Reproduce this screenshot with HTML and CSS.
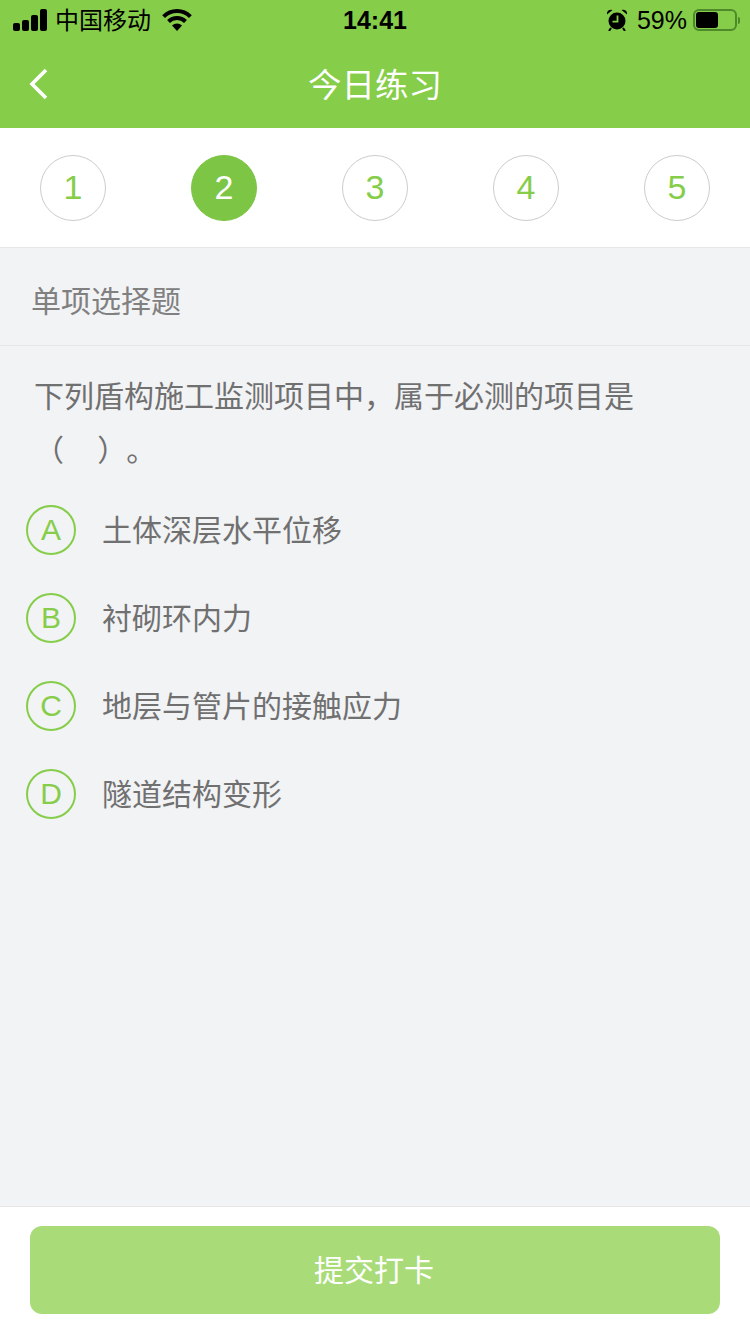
FILE: index.html
```html
<!DOCTYPE html>
<html lang="zh">
<head>
    <meta charset="UTF-8">
    <meta name="viewport" content="width=device-width, initial-scale=1.0">
    <title>今日练习</title>
    <link rel="stylesheet" href="styles.css">
</head>
<body>
    <div class="page">
        <div class="header">
            <div class="status-bar">
                <div class="status-left">
                    <svg class="signal" width="34" height="22" viewBox="0 0 34 22">
                        <rect x="0" y="14" width="7" height="8" rx="2"/>
                        <rect x="9" y="11" width="7" height="11" rx="2"/>
                        <rect x="18" y="6" width="7" height="16" rx="2"/>
                        <rect x="27" y="0" width="7" height="22" rx="2"/>
                    </svg>
                    <span class="carrier">中国移动</span>
                    <svg class="wifi" width="30" height="22" viewBox="0 0 30 22">
                        <path d="M15 22l-5-5.5a7.5 7.5 0 0 1 10 0z"/>
                        <path d="M6.5 12.5a12 12 0 0 1 17 0M1.6 7.6a19 19 0 0 1 26.8 0" fill="none" stroke="#000" stroke-width="4"/>
                    </svg>
                </div>
                <div class="status-time">14:41</div>
                <div class="status-right">
                    <svg class="alarm" width="20" height="22" viewBox="0 0 20 22">
                        <circle cx="10" cy="12" r="8.5"/>
                        <path d="M0 5.5a4 4 0 0 1 5.5-4.5zM20 5.5a4 4 0 0 0-5.5-4.5z"/>
                        <path d="M4 19l-2 3M16 19l2 3" stroke="#000" stroke-width="2" fill="none"/>
                        <path d="M10.5 6.5v6.2h-5" stroke="#86cd4a" stroke-width="1.8" fill="none"/>
                    </svg>
                    <span class="percent">59%</span>
                    <div class="battery"><div class="battery-level"></div></div>
                    <div class="battery-tip"></div>
                </div>
            </div>
            <div class="nav-bar">
                <svg class="back" width="20" height="32" viewBox="0 0 20 32">
                    <path d="M17 2L3 16l14 14" fill="none" stroke="#fff" stroke-width="3.6"/>
                </svg>
                <div class="nav-title">今日练习</div>
            </div>
        </div>

        <div class="steps">
            <div class="step">1</div>
            <div class="step active">2</div>
            <div class="step">3</div>
            <div class="step">4</div>
            <div class="step">5</div>
        </div>

        <div class="content">
            <div class="type-title">单项选择题</div>
            <p class="question">下列盾构施工监测项目中，属于必测的项目是<span class="blank">（&nbsp;&nbsp;&nbsp;&nbsp;）</span>。</p>
            <div class="options">
                <div class="option"><span class="letter">A</span><span class="option-text">土体深层水平位移</span></div>
                <div class="option"><span class="letter">B</span><span class="option-text">衬砌环内力</span></div>
                <div class="option"><span class="letter">C</span><span class="option-text">地层与管片的接触应力</span></div>
                <div class="option"><span class="letter">D</span><span class="option-text">隧道结构变形</span></div>
            </div>
        </div>

        <div class="footer">
            <button class="submit">提交打卡</button>
        </div>
    </div>
</body>
</html>
```

FILE: styles.css
```css
body {
    margin: 0;
    font-family: "Liberation Sans", "Noto Sans CJK SC", sans-serif;
    background: #f2f3f5;
    color: #666;
}

.page {
    width: 750px;
    height: 1334px;
    display: flex;
    flex-direction: column;
    overflow: hidden;
}

.header {
    height: 128px;
    background: #86cd4a;
}

.status-bar {
    height: 40px;
    display: flex;
    align-items: center;
    justify-content: space-between;
    color: #000;
}

.status-left, .status-right {
    width: 300px;
    display: flex;
    align-items: center;
}

.status-left {
    padding-left: 13px;
}

.signal {
    margin-right: 8px;
}

.carrier {
    font-size: 24px;
    padding-bottom: 4px;
}

.wifi {
    margin-left: 11px;
}

.status-time {
    font-size: 25px;
    font-weight: bold;
    padding-right: 3px;
}

.status-right {
    justify-content: flex-end;
    padding-right: 10px;
}

.alarm {
    margin-bottom: 1px;
}

.percent {
    font-size: 25px;
    margin-left: 10px;
}

.battery {
    width: 44px;
    height: 22px;
    margin-left: 6px;
    padding: 1px;
    border: 2px solid #4f8a2a;
    border-radius: 6px;
    box-sizing: border-box;
    display: flex;
}

.battery-level {
    width: 22px;
    background: #000;
    border-radius: 3px;
}

.battery-tip {
    width: 2px;
    height: 7px;
    margin-left: 1px;
    background: #4f8a2a;
    border-radius: 0 2px 2px 0;
}

.nav-bar {
    height: 88px;
    position: relative;
    display: flex;
    align-items: center;
    justify-content: center;
}

.back {
    position: absolute;
    left: 29px;
    top: 28px;
}

.nav-title {
    font-size: 33.5px;
    color: #fff;
    padding-bottom: 4px;
}

.steps {
    height: 119px;
    padding: 0 40px;
    background: #fff;
    border-bottom: 1px solid #e6e6e6;
    display: flex;
    align-items: center;
    justify-content: space-between;
}

.step {
    width: 66px;
    height: 66px;
    box-sizing: border-box;
    border: 1px solid #ccc;
    border-radius: 50%;
    display: flex;
    align-items: center;
    justify-content: center;
    font-size: 34px;
    color: #86cd4a;
}

.step.active {
    background: #7dc544;
    border-color: #7dc544;
    color: #fff;
}

.content {
    flex: 1;
}

.type-title {
    height: 98px;
    padding-left: 31px;
    border-bottom: 1px solid #e6e6e6;
    font-size: 30px;
    line-height: 107px;
    box-sizing: border-box;
    color: #808080;
}

.question {
    margin: 0;
    padding: 24px 100px 0 34px;
    font-size: 30px;
    line-height: 54px;
    color: #707070;
}

.blank {
    margin-right: 14px;
}

.options {
    margin-top: 8px;
    padding-left: 26px;
}

.option {
    height: 88px;
    display: flex;
    align-items: center;
}

.letter {
    width: 50px;
    height: 50px;
    box-sizing: border-box;
    border: 2px solid #86cd4a;
    border-radius: 50%;
    display: flex;
    align-items: center;
    justify-content: center;
    font-size: 30px;
    color: #86cd4a;
}

.option-text {
    margin-left: 26px;
    padding-bottom: 4px;
    font-size: 30px;
    color: #707070;
}

.footer {
    height: 128px;
    box-sizing: border-box;
    padding: 19px 30px 0;
    background: #fff;
    border-top: 1px solid #e6e6e6;
}

.submit {
    display: block;
    width: 100%;
    height: 88px;
    padding: 0 2px 4px 0;
    border: none;
    border-radius: 12px;
    background: #a9dc78;
    color: #fff;
    font-family: inherit;
    font-size: 30px;
}
```
